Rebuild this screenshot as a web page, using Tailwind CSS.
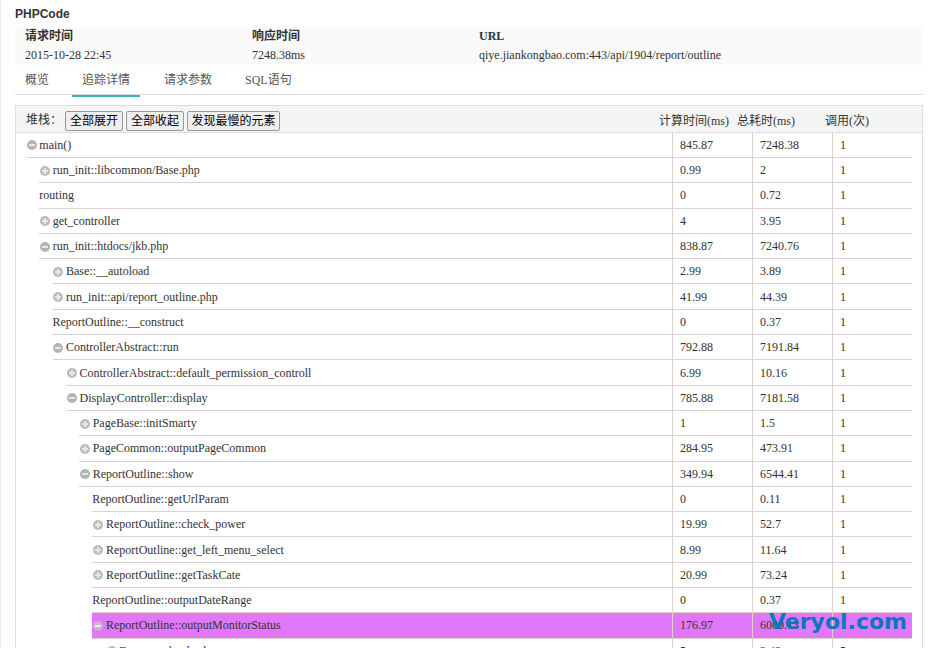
<!DOCTYPE html>
<html><head><meta charset="utf-8"><script src="https://cdn.jsdelivr.net/npm/@tailwindcss/browser@4"></script></head>
<body class="w-[929px] h-[648px] overflow-hidden bg-white text-[#333] font-['Liberation_Serif','Noto_Sans_CJK_SC',serif] text-[12px]">
<div class="relative h-[648px] overflow-hidden border-l border-[#eee] pl-[14px] pr-[6px]">
  <h1 class="font-['Liberation_Sans','Noto_Sans_CJK_SC',sans-serif] font-bold text-[12px] leading-[14px] pt-[7px] pb-[6px] text-[#333]">PHPCode</h1>
  <div class="bg-[#fafafa] h-[38px] flex pl-[10px]">
    <div class="w-[227px]"><div class="font-bold leading-[19px]">请求时间</div><div class="leading-[19px]">2015-10-28 22:45</div></div>
    <div class="w-[227px]"><div class="font-bold leading-[19px]">响应时间</div><div class="leading-[19px]">7248.38ms</div></div>
    <div><div class="font-bold leading-[19px]">URL</div><div class="leading-[19px]">qiye.jiankongbao.com:443/api/1904/report/outline</div></div>
  </div>
  <div class="flex h-[30px] border-b border-[#ddd] text-[#555]">
    <div class="w-[57px] pl-[10px] pt-[7px] leading-[16px]">概览</div>
    <div class="w-[68px] text-center pt-[7px] leading-[16px] border-b-2 border-[#3bb4b4] h-[32px] -mb-px">追踪详情</div>
    <div class="w-[81px] pl-[24px] pt-[7px] leading-[16px]">请求参数</div>
    <div class="w-[80px] pl-[24px] pt-[7px] leading-[16px] whitespace-nowrap">SQL语句</div>
  </div>
  <div class="mt-[10px] border border-[#ddd] h-[600px] overflow-hidden">
    <div class="h-[27px] bg-[#f5f5f5] border-b border-[#ddd] flex items-center pl-[10px] pt-[3px]">
      <span class="w-[39px] text-[#333] -mt-[2px]">堆栈：</span>
      <button class="h-[20px] w-[58px] mr-[3px] border border-[#999] rounded-[2px] bg-[#efefef] text-[12px] leading-[16px] text-black">全部展开</button>
      <button class="h-[20px] w-[58px] mr-[3px] border border-[#999] rounded-[2px] bg-[#efefef] text-[12px] leading-[16px] text-black">全部收起</button>
      <button class="h-[20px] w-[93px] border border-[#999] rounded-[2px] bg-[#efefef] text-[12px] leading-[16px] text-black">发现最慢的元素</button>
      <span class="ml-auto w-[78px]">计算时间(ms)</span><span class="w-[88px]">总耗时(ms)</span><span class="w-[97px]">调用(次)</span>
    </div>
    <div class="px-[10px] -mt-[0.3px]">
      <div class="flex h-[25.3px] border-b border-[#e0d0d0]"><div class="flex-1 flex items-center"><span class="w-[13.33px] shrink-0"><svg class="w-[10px] h-[10px] ml-[0.5px] mt-[1px]" viewBox="0 0 10 10"><circle cx="5" cy="5" r="5" fill="#b4b4b4"/><rect x="2" y="4" width="6" height="2" fill="#e8e8e8"/></svg></span>main()</div><div class="w-[80px] border-l border-[#e0d0d0] pl-[7px] flex items-center">845.87</div><div class="w-[80px] border-l border-[#e0d0d0] pl-[7px] flex items-center">7248.38</div><div class="w-[80px] border-l border-[#e0d0d0] pl-[7px] flex items-center">1</div></div>
      <div class="flex h-[25.3px] border-b border-[#e0d0d0] ml-[13.33px]"><div class="flex-1 flex items-center"><span class="w-[13.33px] shrink-0"><svg class="w-[10px] h-[10px] ml-[0.5px] mt-[1px]" viewBox="0 0 10 10"><circle cx="5" cy="5" r="5" fill="#bcbcbc"/><path d="M2 5h6M5 2v6" stroke="#e8e8e8" stroke-width="2"/></svg></span>run_init::libcommon/Base.php</div><div class="w-[80px] border-l border-[#e0d0d0] pl-[7px] flex items-center">0.99</div><div class="w-[80px] border-l border-[#e0d0d0] pl-[7px] flex items-center">2</div><div class="w-[80px] border-l border-[#e0d0d0] pl-[7px] flex items-center">1</div></div>
      <div class="flex h-[25.3px] border-b border-[#e0d0d0] ml-[13.33px]"><div class="flex-1 flex items-center">routing</div><div class="w-[80px] border-l border-[#e0d0d0] pl-[7px] flex items-center">0</div><div class="w-[80px] border-l border-[#e0d0d0] pl-[7px] flex items-center">0.72</div><div class="w-[80px] border-l border-[#e0d0d0] pl-[7px] flex items-center">1</div></div>
      <div class="flex h-[25.3px] border-b border-[#e0d0d0] ml-[13.33px]"><div class="flex-1 flex items-center"><span class="w-[13.33px] shrink-0"><svg class="w-[10px] h-[10px] ml-[0.5px] mt-[1px]" viewBox="0 0 10 10"><circle cx="5" cy="5" r="5" fill="#bcbcbc"/><path d="M2 5h6M5 2v6" stroke="#e8e8e8" stroke-width="2"/></svg></span>get_controller</div><div class="w-[80px] border-l border-[#e0d0d0] pl-[7px] flex items-center">4</div><div class="w-[80px] border-l border-[#e0d0d0] pl-[7px] flex items-center">3.95</div><div class="w-[80px] border-l border-[#e0d0d0] pl-[7px] flex items-center">1</div></div>
      <div class="flex h-[25.3px] border-b border-[#e0d0d0] ml-[13.33px]"><div class="flex-1 flex items-center"><span class="w-[13.33px] shrink-0"><svg class="w-[10px] h-[10px] ml-[0.5px] mt-[1px]" viewBox="0 0 10 10"><circle cx="5" cy="5" r="5" fill="#b4b4b4"/><rect x="2" y="4" width="6" height="2" fill="#e8e8e8"/></svg></span>run_init::htdocs/jkb.php</div><div class="w-[80px] border-l border-[#e0d0d0] pl-[7px] flex items-center">838.87</div><div class="w-[80px] border-l border-[#e0d0d0] pl-[7px] flex items-center">7240.76</div><div class="w-[80px] border-l border-[#e0d0d0] pl-[7px] flex items-center">1</div></div>
      <div class="flex h-[25.3px] border-b border-[#e0d0d0] ml-[26.67px]"><div class="flex-1 flex items-center"><span class="w-[13.33px] shrink-0"><svg class="w-[10px] h-[10px] ml-[0.5px] mt-[1px]" viewBox="0 0 10 10"><circle cx="5" cy="5" r="5" fill="#bcbcbc"/><path d="M2 5h6M5 2v6" stroke="#e8e8e8" stroke-width="2"/></svg></span>Base::__autoload</div><div class="w-[80px] border-l border-[#e0d0d0] pl-[7px] flex items-center">2.99</div><div class="w-[80px] border-l border-[#e0d0d0] pl-[7px] flex items-center">3.89</div><div class="w-[80px] border-l border-[#e0d0d0] pl-[7px] flex items-center">1</div></div>
      <div class="flex h-[25.3px] border-b border-[#e0d0d0] ml-[26.67px]"><div class="flex-1 flex items-center"><span class="w-[13.33px] shrink-0"><svg class="w-[10px] h-[10px] ml-[0.5px] mt-[1px]" viewBox="0 0 10 10"><circle cx="5" cy="5" r="5" fill="#bcbcbc"/><path d="M2 5h6M5 2v6" stroke="#e8e8e8" stroke-width="2"/></svg></span>run_init::api/report_outline.php</div><div class="w-[80px] border-l border-[#e0d0d0] pl-[7px] flex items-center">41.99</div><div class="w-[80px] border-l border-[#e0d0d0] pl-[7px] flex items-center">44.39</div><div class="w-[80px] border-l border-[#e0d0d0] pl-[7px] flex items-center">1</div></div>
      <div class="flex h-[25.3px] border-b border-[#e0d0d0] ml-[26.4px]"><div class="flex-1 flex items-center">ReportOutline::__construct</div><div class="w-[80px] border-l border-[#e0d0d0] pl-[7px] flex items-center">0</div><div class="w-[80px] border-l border-[#e0d0d0] pl-[7px] flex items-center">0.37</div><div class="w-[80px] border-l border-[#e0d0d0] pl-[7px] flex items-center">1</div></div>
      <div class="flex h-[25.3px] border-b border-[#e0d0d0] ml-[26.67px]"><div class="flex-1 flex items-center"><span class="w-[13.33px] shrink-0"><svg class="w-[10px] h-[10px] ml-[0.5px] mt-[1px]" viewBox="0 0 10 10"><circle cx="5" cy="5" r="5" fill="#b4b4b4"/><rect x="2" y="4" width="6" height="2" fill="#e8e8e8"/></svg></span>ControllerAbstract::run</div><div class="w-[80px] border-l border-[#e0d0d0] pl-[7px] flex items-center">792.88</div><div class="w-[80px] border-l border-[#e0d0d0] pl-[7px] flex items-center">7191.84</div><div class="w-[80px] border-l border-[#e0d0d0] pl-[7px] flex items-center">1</div></div>
      <div class="flex h-[25.3px] border-b border-[#e0d0d0] ml-[40px]"><div class="flex-1 flex items-center"><span class="w-[13.5px] shrink-0"><svg class="w-[10px] h-[10px] ml-[0.5px] mt-[1px]" viewBox="0 0 10 10"><circle cx="5" cy="5" r="5" fill="#bcbcbc"/><path d="M2 5h6M5 2v6" stroke="#e8e8e8" stroke-width="2"/></svg></span>ControllerAbstract::default_permission_controll</div><div class="w-[80px] border-l border-[#e0d0d0] pl-[7px] flex items-center">6.99</div><div class="w-[80px] border-l border-[#e0d0d0] pl-[7px] flex items-center">10.16</div><div class="w-[80px] border-l border-[#e0d0d0] pl-[7px] flex items-center">1</div></div>
      <div class="flex h-[25.3px] border-b border-[#e0d0d0] ml-[40px]"><div class="flex-1 flex items-center"><span class="w-[13.5px] shrink-0"><svg class="w-[10px] h-[10px] ml-[0.5px] mt-[1px]" viewBox="0 0 10 10"><circle cx="5" cy="5" r="5" fill="#b4b4b4"/><rect x="2" y="4" width="6" height="2" fill="#e8e8e8"/></svg></span>DisplayController::display</div><div class="w-[80px] border-l border-[#e0d0d0] pl-[7px] flex items-center">785.88</div><div class="w-[80px] border-l border-[#e0d0d0] pl-[7px] flex items-center">7181.58</div><div class="w-[80px] border-l border-[#e0d0d0] pl-[7px] flex items-center">1</div></div>
      <div class="flex h-[25.3px] border-b border-[#e0d0d0] ml-[53.33px]"><div class="flex-1 flex items-center"><span class="w-[13.33px] shrink-0"><svg class="w-[10px] h-[10px] ml-[0.5px] mt-[1px]" viewBox="0 0 10 10"><circle cx="5" cy="5" r="5" fill="#bcbcbc"/><path d="M2 5h6M5 2v6" stroke="#e8e8e8" stroke-width="2"/></svg></span>PageBase::initSmarty</div><div class="w-[80px] border-l border-[#e0d0d0] pl-[7px] flex items-center">1</div><div class="w-[80px] border-l border-[#e0d0d0] pl-[7px] flex items-center">1.5</div><div class="w-[80px] border-l border-[#e0d0d0] pl-[7px] flex items-center">1</div></div>
      <div class="flex h-[25.3px] border-b border-[#e0d0d0] ml-[53.33px]"><div class="flex-1 flex items-center"><span class="w-[13.33px] shrink-0"><svg class="w-[10px] h-[10px] ml-[0.5px] mt-[1px]" viewBox="0 0 10 10"><circle cx="5" cy="5" r="5" fill="#bcbcbc"/><path d="M2 5h6M5 2v6" stroke="#e8e8e8" stroke-width="2"/></svg></span>PageCommon::outputPageCommon</div><div class="w-[80px] border-l border-[#e0d0d0] pl-[7px] flex items-center">284.95</div><div class="w-[80px] border-l border-[#e0d0d0] pl-[7px] flex items-center">473.91</div><div class="w-[80px] border-l border-[#e0d0d0] pl-[7px] flex items-center">1</div></div>
      <div class="flex h-[25.3px] border-b border-[#e0d0d0] ml-[53.33px]"><div class="flex-1 flex items-center"><span class="w-[13.33px] shrink-0"><svg class="w-[10px] h-[10px] ml-[0.5px] mt-[1px]" viewBox="0 0 10 10"><circle cx="5" cy="5" r="5" fill="#b4b4b4"/><rect x="2" y="4" width="6" height="2" fill="#e8e8e8"/></svg></span>ReportOutline::show</div><div class="w-[80px] border-l border-[#e0d0d0] pl-[7px] flex items-center">349.94</div><div class="w-[80px] border-l border-[#e0d0d0] pl-[7px] flex items-center">6544.41</div><div class="w-[80px] border-l border-[#e0d0d0] pl-[7px] flex items-center">1</div></div>
      <div class="flex h-[25.3px] border-b border-[#e0d0d0] ml-[66.2px]"><div class="flex-1 flex items-center">ReportOutline::getUrlParam</div><div class="w-[80px] border-l border-[#e0d0d0] pl-[7px] flex items-center">0</div><div class="w-[80px] border-l border-[#e0d0d0] pl-[7px] flex items-center">0.11</div><div class="w-[80px] border-l border-[#e0d0d0] pl-[7px] flex items-center">1</div></div>
      <div class="flex h-[25.3px] border-b border-[#e0d0d0] ml-[66.2px]"><div class="flex-1 flex items-center"><span class="w-[13.8px] shrink-0"><svg class="w-[10px] h-[10px] ml-[0.8px] mt-[1px]" viewBox="0 0 10 10"><circle cx="5" cy="5" r="5" fill="#bcbcbc"/><path d="M2 5h6M5 2v6" stroke="#e8e8e8" stroke-width="2"/></svg></span>ReportOutline::check_power</div><div class="w-[80px] border-l border-[#e0d0d0] pl-[7px] flex items-center">19.99</div><div class="w-[80px] border-l border-[#e0d0d0] pl-[7px] flex items-center">52.7</div><div class="w-[80px] border-l border-[#e0d0d0] pl-[7px] flex items-center">1</div></div>
      <div class="flex h-[25.3px] border-b border-[#e0d0d0] ml-[66.2px]"><div class="flex-1 flex items-center"><span class="w-[13.8px] shrink-0"><svg class="w-[10px] h-[10px] ml-[0.8px] mt-[1px]" viewBox="0 0 10 10"><circle cx="5" cy="5" r="5" fill="#bcbcbc"/><path d="M2 5h6M5 2v6" stroke="#e8e8e8" stroke-width="2"/></svg></span>ReportOutline::get_left_menu_select</div><div class="w-[80px] border-l border-[#e0d0d0] pl-[7px] flex items-center">8.99</div><div class="w-[80px] border-l border-[#e0d0d0] pl-[7px] flex items-center">11.64</div><div class="w-[80px] border-l border-[#e0d0d0] pl-[7px] flex items-center">1</div></div>
      <div class="flex h-[25.3px] border-b border-[#e0d0d0] ml-[66.2px]"><div class="flex-1 flex items-center"><span class="w-[13.8px] shrink-0"><svg class="w-[10px] h-[10px] ml-[0.8px] mt-[1px]" viewBox="0 0 10 10"><circle cx="5" cy="5" r="5" fill="#bcbcbc"/><path d="M2 5h6M5 2v6" stroke="#e8e8e8" stroke-width="2"/></svg></span>ReportOutline::getTaskCate</div><div class="w-[80px] border-l border-[#e0d0d0] pl-[7px] flex items-center">20.99</div><div class="w-[80px] border-l border-[#e0d0d0] pl-[7px] flex items-center">73.24</div><div class="w-[80px] border-l border-[#e0d0d0] pl-[7px] flex items-center">1</div></div>
      <div class="flex h-[25.3px] border-b border-[#e0d0d0] ml-[66.2px]"><div class="flex-1 flex items-center">ReportOutline::outputDateRange</div><div class="w-[80px] border-l border-[#e0d0d0] pl-[7px] flex items-center">0</div><div class="w-[80px] border-l border-[#e0d0d0] pl-[7px] flex items-center">0.37</div><div class="w-[80px] border-l border-[#e0d0d0] pl-[7px] flex items-center">1</div></div>
      <div class="flex h-[25.3px] border-b border-[#e0d0d0] ml-[66.2px] bg-[#e078fb]"><div class="flex-1 flex items-center"><span class="w-[13.8px] shrink-0"><svg class="w-[10px] h-[10px] ml-[0.8px] mt-[1px]" viewBox="0 0 10 10"><circle cx="5" cy="5" r="5" fill="#c8b4cc"/><rect x="2" y="4" width="6" height="2" fill="#eeeeee"/></svg></span>ReportOutline::outputMonitorStatus</div><div class="w-[80px] border-l border-[#e0d0d0] pl-[7px] flex items-center">176.97</div><div class="w-[80px] border-l border-[#e0d0d0] pl-[7px] flex items-center">6000.13</div><div class="w-[80px] border-l border-[#e0d0d0] pl-[7px] flex items-center">1</div></div>
      <div class="flex h-[25.3px] border-b border-[#e0d0d0] ml-[80px]"><div class="flex-1 flex items-center"><span class="w-[13.33px] shrink-0"><svg class="w-[10px] h-[10px] ml-[0.5px] mt-[1px]" viewBox="0 0 10 10"><circle cx="5" cy="5" r="5" fill="#bcbcbc"/><path d="M2 5h6M5 2v6" stroke="#e8e8e8" stroke-width="2"/></svg></span>Framework::check</div><div class="w-[80px] border-l border-[#e0d0d0] pl-[7px] flex items-center">5</div><div class="w-[80px] border-l border-[#e0d0d0] pl-[7px] flex items-center">3.42</div><div class="w-[80px] border-l border-[#e0d0d0] pl-[7px] flex items-center">5</div></div>
    </div>
  </div>
  <div class="absolute left-[768px] top-[609px] font-['DejaVu_Sans',sans-serif] font-bold text-[22px] leading-[26px] text-[#0a78b8]">Veryol.com</div>
</div>
</body></html>
